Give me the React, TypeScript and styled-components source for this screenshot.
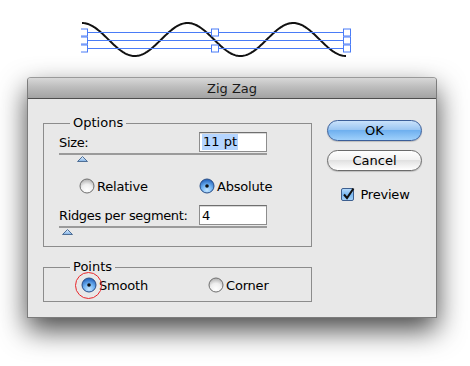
import React from "react";
import styled, { createGlobalStyle } from "styled-components";

const Global = createGlobalStyle`
  html, body { margin: 0; padding: 0; background: #ffffff; }
  body { font-family: "DejaVu Sans", "Lucida Grande", sans-serif; font-size: 13px; color: #000; }
  * { box-sizing: border-box; }
`;

const Page = styled.div`
  width: 470px;
  height: 366px;
  position: relative;
  overflow: hidden;
  background: #fff;
`;

const WaveArea = styled.div`
  height: 77px;
  padding: 21px 0 0 81px;
`;

const Dialog = styled.div`
  margin-left: 27px;
  width: 410px;
  height: 241px;
  border: 1px solid #7c7c7c;
  border-top-color: #9a9a9a;
  border-radius: 4px 4px 0 0;
  background: #e8e8e8;
  box-shadow: 0 12px 28px rgba(0, 0, 0, 0.72);
  display: flex;
  flex-direction: column;
`;

const TitleBar = styled.div`
  height: 21px;
  flex: none;
  border-radius: 3px 3px 0 0;
  background: linear-gradient(#d8d8d8, #bdbdbd 45%, #a3a3a3);
  border-bottom: 1px solid #4e4e4e;
  display: flex;
  align-items: center;
  justify-content: center;
  font-size: 13px;
  color: #1a1a1a;
  line-height: 1;
  padding-top: 1px;
`;

const Body = styled.div`
  flex: 1;
  display: flex;
  padding: 16px 0 0 15px;
`;

const LeftCol = styled.div`
  width: 269px;
  display: flex;
  flex-direction: column;
  gap: 12px;
`;

const Group = styled.fieldset<{ $h: number }>`
  margin: 0;
  padding: 0 0 0 15px;
  width: 269px;
  height: ${(p) => p.$h}px;
  border: 1px solid #8c8c8c;
  position: relative;
`;

const Legend = styled.legend`
  margin-left: 11px;
  padding: 0 3px 0 3px;
  line-height: 16px;
  font-size: 13px;
`;

const FieldRow = styled.div<{ $mt: number }>`
  display: flex;
  align-items: center;
  justify-content: space-between;
  width: 208px;
  height: 20px;
  margin-top: ${(p) => p.$mt}px;
`;

const Label = styled.span`
  font-size: 13px;
  letter-spacing: -0.35px;
`;

const TextInput = styled.div`
  width: 68px;
  height: 20px;
  background: #fff;
  border: 1px solid #8d8d8d;
  border-top-color: #6f6f6f;
  box-shadow: inset 0 1px 0 #d8d8d8;
  display: flex;
  align-items: center;
  padding-left: 2px;
  font-size: 13px;
`;

const Selected = styled.span`
  background: #b5d5ff;
  padding: 0 1px;
  line-height: 16px;
`;

const SliderTrack = styled.div<{ $mt: number }>`
  width: 208px;
  height: 8px;
  margin-top: ${(p) => p.$mt}px;
  border-top: 2px solid #9a9a9a;
  position: relative;
`;

const Thumb = styled.svg<{ $x: number }>`
  position: absolute;
  top: 1px;
  left: ${(p) => p.$x}px;
`;

const RadioRow = styled.div<{ $mt: number; $w: number }>`
  display: flex;
  align-items: center;
  margin-top: ${(p) => p.$mt}px;
  margin-left: ${(p) => p.$w}px;
`;

const RadioItem = styled.label<{ $w: number }>`
  display: flex;
  align-items: center;
  gap: 2px;
  width: ${(p) => p.$w}px;
  font-size: 13px;
  letter-spacing: -0.2px;
  position: relative;
`;

const RightCol = styled.div`
  margin-left: 15px;
  padding-top: 5px;
  width: 95px;
  display: flex;
  flex-direction: column;
  align-items: center;
`;

const Button = styled.div<{ $primary?: boolean }>`
  width: 95px;
  height: 21px;
  border-radius: 11px;
  display: flex;
  align-items: center;
  justify-content: center;
  font-size: 13px;
  border: 1px solid ${(p) => (p.$primary ? "#3b5f9a" : "#6b6b6b")};
  background: ${(p) =>
    p.$primary
      ? "linear-gradient(#c9e2fb 0%, #9cc7f3 45%, #6fb0ef 50%, #9fd0fb 100%)"
      : "linear-gradient(#ffffff 0%, #f2f2f2 45%, #e1e1e1 50%, #ffffff 100%)"};
  box-shadow: 0 1px 1px rgba(0, 0, 0, 0.18);
  & + & {
    margin-top: 9px;
  }
`;

const CheckRow = styled.div`
  display: flex;
  align-items: center;
  gap: 5px;
  margin-top: 16px;
  margin-left: 2px;
  font-size: 13px;
  letter-spacing: -0.2px;
`;

const RedCircle = styled.div`
  position: absolute;
  left: -6px;
  top: 50%;
  margin-top: -13px;
  width: 27px;
  height: 27px;
  border-radius: 50%;
  border: 1px solid #e8262a;
  pointer-events: none;
`;

const Wave = () => {
  const x0 = 82;
  const x1 = 346;
  const yc = 39.5;
  const a = 16.5;
  const pts: string[] = [];
  for (let x = x0; x <= x1; x += 1) {
    const t = ((x - x0) / (x1 - x0)) * 2.5 * 2 * Math.PI;
    pts.push(`${x - 81},${(yc - a * Math.cos(t) - 21).toFixed(2)}`);
  }
  const blue = "#4a7cf7";
  const sq = (cx: number, cy: number) => (
    <rect key={`${cx}-${cy}`} x={cx - 3.5} y={cy - 3.5} width={7} height={7} fill="#fff" stroke={blue} strokeWidth={1} />
  );
  return (
    <svg width={272} height={42} viewBox="0 0 272 42" style={{ display: "block" }}>
      <polyline points={pts.join(" ")} fill="none" stroke="#111" strokeWidth={2} />
      <line x1={3} y1={11.5} x2={266} y2={11.5} stroke={blue} strokeWidth={1} />
      <line x1={3} y1={19.5} x2={266} y2={19.5} stroke={blue} strokeWidth={1} />
      <line x1={3} y1={27.5} x2={266} y2={27.5} stroke={blue} strokeWidth={1} />
      {sq(3, 11.5)}
      {sq(3, 19.5)}
      {sq(3, 27.5)}
      {sq(134, 11.5)}
      {sq(134, 27.5)}
      {sq(266, 11.5)}
      {sq(266, 19.5)}
      {sq(266, 27.5)}
    </svg>
  );
};

const Radio = ({ on }: { on?: boolean }) => (
  <svg width={16} height={16} viewBox="0 0 16 16">
    <defs>
      <radialGradient id="rOff" cx="50%" cy="80%" r="70%">
        <stop offset="0%" stopColor="#ffffff" />
        <stop offset="60%" stopColor="#eeeeee" />
        <stop offset="100%" stopColor="#bdbdbd" />
      </radialGradient>
      <radialGradient id="rOn" cx="50%" cy="80%" r="70%">
        <stop offset="0%" stopColor="#c6e6ff" />
        <stop offset="55%" stopColor="#6fb2f2" />
        <stop offset="100%" stopColor="#2f6fc4" />
      </radialGradient>
    </defs>
    <circle cx={8} cy={8} r={7} fill={on ? "url(#rOn)" : "url(#rOff)"} stroke={on ? "#284d86" : "#6e6e6e"} strokeWidth={1} />
    {on && <circle cx={8} cy={8} r={1.8} fill="#111" />}
  </svg>
);

const CheckBox = () => (
  <svg width={14} height={14} viewBox="0 0 14 14">
    <defs>
      <linearGradient id="cb" x1="0" y1="0" x2="0" y2="1">
        <stop offset="0%" stopColor="#b9dcfc" />
        <stop offset="50%" stopColor="#7ab8f1" />
        <stop offset="100%" stopColor="#a6d4fb" />
      </linearGradient>
    </defs>
    <rect x={0.5} y={0.5} width={12} height={12} rx={1.5} fill="url(#cb)" stroke="#3d5f8f" />
    <path d="M3 6.5 L6 10 L12.5 0.5" fill="none" stroke="#111" strokeWidth={2} />
  </svg>
);

const ThumbIcon = ({ x }: { x: number }) => (
  <Thumb $x={x} width={11} height={6} viewBox="0 0 11 6">
    <defs>
      <linearGradient id="th" x1="0" y1="0" x2="0" y2="1">
        <stop offset="0%" stopColor="#e6f2ff" />
        <stop offset="100%" stopColor="#7fb1e6" />
      </linearGradient>
    </defs>
    <path d="M5.5 0.5 L10.5 5.5 L0.5 5.5 Z" fill="url(#th)" stroke="#4f6f96" strokeWidth={1} strokeLinejoin="round" />
  </Thumb>
);

export default function App() {
  return (
    <Page>
      <Global />
      <WaveArea>
        <Wave />
      </WaveArea>
      <Dialog>
        <TitleBar>Zig Zag</TitleBar>
        <Body>
          <LeftCol>
            <Group $h={132}>
              <Legend>Options</Legend>
              <FieldRow $mt={1}>
                <Label>Size:</Label>
                <TextInput>
                  <Selected>11 pt</Selected>
                </TextInput>
              </FieldRow>
              <SliderTrack $mt={1}>
                <ThumbIcon x={18} />
              </SliderTrack>
              <RadioRow $mt={17} $w={20}>
                <RadioItem $w={120}>
                  <Radio />
                  Relative
                </RadioItem>
                <RadioItem $w={90}>
                  <Radio on />
                  Absolute
                </RadioItem>
              </RadioRow>
              <FieldRow $mt={11}>
                <Label>Ridges per segment:</Label>
                <TextInput>4</TextInput>
              </FieldRow>
              <SliderTrack $mt={1}>
                <ThumbIcon x={3} />
              </SliderTrack>
            </Group>
            <Group $h={43}>
              <Legend>Points</Legend>
              <RadioRow $mt={2} $w={22}>
                <RadioItem $w={127}>
                  <Radio on />
                  Smooth
                  <RedCircle />
                </RadioItem>
                <RadioItem $w={90}>
                  <Radio />
                  Corner
                </RadioItem>
              </RadioRow>
            </Group>
          </LeftCol>
          <RightCol>
            <Button $primary>OK</Button>
            <Button>Cancel</Button>
            <CheckRow>
              <CheckBox />
              Preview
            </CheckRow>
          </RightCol>
        </Body>
      </Dialog>
    </Page>
  );
}
